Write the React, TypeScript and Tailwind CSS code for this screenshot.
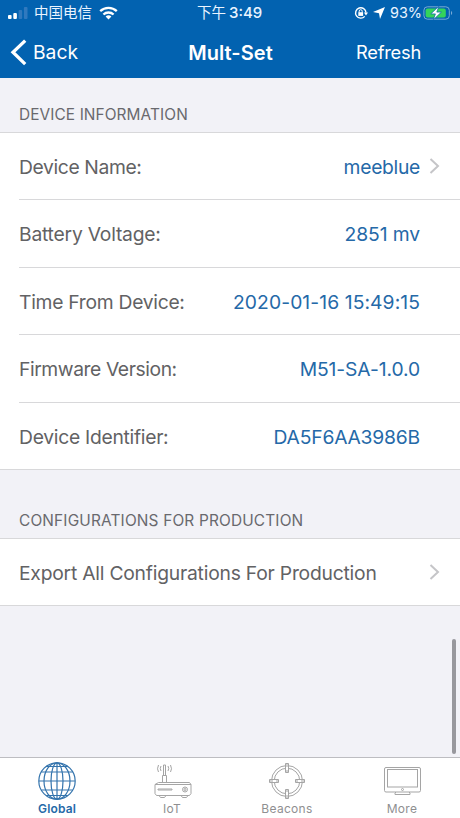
import type { ReactNode } from "react";

function Chevron() {
  return (
    <svg className="-mt-[2px]" width="11" height="16" viewBox="0 0 11 16" fill="none" stroke="#c5c5c8" strokeWidth="2">
      <path d="M1.5 1 9 8l-7.5 7" />
    </svg>
  );
}

type RowProps = { label: string; value?: string; labelClass: string; valueClass?: string; link?: boolean; last?: boolean; height: string };

function Row({ label, value, labelClass, valueClass = "", link, last, height }: RowProps) {
  return (
    <div className={`flex ${height} ${last ? "" : "pl-[19px]"}`}>
      <div className={`flex flex-1 items-center whitespace-nowrap border-b border-[#d8d8da] pt-[2px] text-[19.3px] ${last ? "pl-[19px]" : ""}`}>
        <span className={`text-[#626264] ${labelClass}`}>{label}</span>
        <span className={`ml-auto text-[#2569a8] ${valueClass}`}>{value}</span>
        <span className="ml-[9px] flex w-[31px]">{link && <Chevron />}</span>
      </div>
    </div>
  );
}

function StatusBar() {
  return (
    <div className="flex h-[26px] items-center text-[14.5px] leading-[26px] text-[#eaf4ff]">
      <div className="flex w-[197px] items-center pl-2">
        <svg width="20" height="13" viewBox="0 0 20 13">
          <rect x="0" y="8" width="3.6" height="4" rx="1" fill="#fff" />
          <rect x="5.3" y="6" width="3.6" height="6" rx="1" fill="#fff" />
          <rect x="10.6" y="3" width="3.6" height="9" rx="1" fill="#3079be" />
          <rect x="15.9" y="0" width="3.6" height="12" rx="1" fill="#3079be" />
        </svg>
        <span className="ml-[6px]">中国电信</span>
        <svg className="ml-[7px]" width="19" height="14" viewBox="0 0 19 14" fill="none" stroke="#fff" strokeWidth="2.3">
          <path d="M1.2 5.2a12 12 0 0 1 16.6 0M4.4 8.5a7.5 7.5 0 0 1 10.2 0" />
          <path d="M9.5 13.5 6.6 10.6a4.2 4.2 0 0 1 5.8 0Z" fill="#fff" stroke="none" />
        </svg>
      </div>
      <span className="w-[157px]">下午 <span className="-ml-[1px] text-[15px] font-medium">3:49</span></span>
      <svg width="14" height="14" viewBox="0 0 14 14" fill="none" stroke="#fff" strokeWidth="1.4">
        <path d="M10.700 10.400A5.200 5.200 0 1 1 12 6.600" />
        <path d="M9.900 6.500h4.100l-2 2.900Z" fill="#fff" stroke="none" />
        <rect x="4.3" y="6.2" width="4.8" height="3.7" fill="#fff" stroke="none" />
        <path d="M5.200 6.500V5.200a1.500 1.500 0 0 1 3 0v1.300" strokeWidth="1" />
      </svg>
      <svg className="ml-[5px]" width="12" height="12" viewBox="0 0 12 12" fill="#fff">
        <path d="M12 0 7 12 6 6.200 0 5Z" />
      </svg>
      <span className="ml-[5px] w-[33px] whitespace-nowrap text-[14.4px]">93%</span>
      <svg width="30" height="14" viewBox="0 0 30 14">
        <rect x=".9" y=".8" width="25.4" height="12.4" rx="3.5" fill="none" stroke="#78a9d5" />
        <rect x="2.6" y="2.5" width="20.2" height="9" rx="2" fill="#34d35b" />
        <path d="M28 5v4c1.6-.6 1.6-3.4 0-4" fill="#78a9d5" />
        <path d="M15.800.3 7.800 7.900h4.600L10.400 13.700l8-7.600h-4.600Z" fill="#fff" stroke="#0862ae" strokeWidth=".7" />
      </svg>
    </div>
  );
}

function Tab({ label, labelClass, children }: { label: string; labelClass: string; children: ReactNode }) {
  return (
    <div className="flex w-[115px] flex-col items-center">
      <svg className="-ml-[2px]" width="40" height="40" viewBox="0 0 40 40" fill="none" stroke="#a5a5a5" strokeWidth="1">{children}</svg>
      <span className={`-ml-[1px] text-[12px] leading-[15px] ${labelClass}`}>{label}</span>
    </div>
  );
}

export default function App() {
  return (
    <div className="flex h-[818px] w-[460px] flex-col overflow-hidden bg-[#f2f2f7] font-['Inter','Noto_Sans_CJK_SC',sans-serif]">
      <header className="h-[78px] shrink-0 bg-[#0262b0] text-white">
        <StatusBar />
        <div className="flex h-[52px] items-center text-[19.3px]">
          <div className="flex w-[165px] items-center pl-[10px]">
            <svg width="17" height="27" viewBox="0 0 17 27" fill="none" stroke="#fff" strokeWidth="3.3">
              <path d="M15.2 1.6 3 13.300l12.200 11.800" />
            </svg>
            <span className="ml-[6px]">Back</span>
          </div>
          <span className="w-[131px] pt-px text-center text-[20px] font-semibold tracking-[0.05px]">Mult-Set</span>
          <span className="flex-1 pr-[39px] pt-px text-right text-[18.3px] tracking-[-0.22px]">Refresh</span>
        </div>
      </header>
      <main className="relative h-[679px] shrink-0">
        <h2 className="flex h-[55px] items-end border-b border-[#d8d8da] pb-[6px] pl-[19px] text-[15.4px] tracking-[0.1px] text-[#69696e]">DEVICE INFORMATION</h2>
        <div className="bg-white">
          <Row height="h-[67px]" label="Device Name:" value="meeblue" labelClass="tracking-[-0.38px]" valueClass="tracking-[-0.3px]" link />
          <Row height="h-[68px]" label="Battery Voltage:" value="2851 mv" labelClass="tracking-[-0.22px]" valueClass="tracking-[-0.1px]" />
          <Row height="h-[67px]" label="Time From Device:" value="2020-01-16 15:49:15" labelClass="tracking-[-0.28px]" valueClass="tracking-[0.08px]" />
          <Row height="h-[68px]" label="Firmware Version:" value="M51-SA-1.0.0" labelClass="tracking-[-0.42px]" valueClass="tracking-[-0.1px]" />
          <Row height="h-[67px]" label="Device Identifier:" value="DA5F6AA3986B" labelClass="tracking-[-0.28px]" valueClass="tracking-[-0.2px]" last />
        </div>
        <h2 className="flex h-[69px] items-end border-b border-[#d8d8da] pb-[6px] pl-[19px] text-[15.4px] tracking-[0.17px] text-[#69696e]">CONFIGURATIONS FOR PRODUCTION</h2>
        <div className="bg-white">
          <Row height="h-[67px]" label="Export All Configurations For Production" labelClass="tracking-[-0.22px]" link last />
        </div>
        <div className="absolute right-[4px] top-[561px] h-[115px] w-[4px] rounded-full bg-[#98989d]" />
      </main>
      <nav className="flex flex-1 border-t border-[#bdbdc1] bg-white pt-[3px] text-[#8f8f91]">
        <Tab label="Global" labelClass="font-semibold tracking-[0.15px] text-[#2569a8]">
          <g stroke="#3474ad" strokeWidth="1.2">
            <circle cx="20" cy="20" r="18.2" />
            <ellipse cx="20" cy="20" rx="6" ry="18.2" />
            <ellipse cx="20" cy="20" rx="13" ry="18.2" />
            <path d="M20 2v36M2 20h36M4.500 11h31M4.500 29h31M9 5.500h22M9 34.500h22" />
          </g>
        </Tab>
        <Tab label="IoT" labelClass="tracking-[0.2px]">
          <g transform="translate(1 -1)">
            <path d="M5.500 22.500h31l1.500 2v9l-1.500 2h-33l-1.500-2v-9ZM2 24.500h36M5 29h14v1H5ZM6 35.500l1.500 2h4l1.500-2M28 35.500l1.500 2h4l1.500-2M9.500 22.500v-7h4v7M10.500 15.500V5h2v10.500M8 6q-1.500 2.500 0 5M5.500 5q-2 4 0 7M15 6q1.500 2.500 0 5M17.500 5q2 4 0 7" />
            <circle cx="32" cy="29.500" r="2.500" />
            <circle cx="32" cy="29.500" r="1" />
          </g>
        </Tab>
        <Tab label="Beacons" labelClass="tracking-[0.3px]">
          <circle cx="20" cy="20" r="15.500" />
          <circle cx="20" cy="20" r="12.800" />
          <g fill="#fff">
            <path d="M18.500 2.500h3v9h-3ZM18.500 28.500h3v9h-3ZM2.500 18.500h9v3h-9ZM28.500 18.500h9v3h-9Z" />
            <path d="M20 3v3M20 9v2M20 29v2M20 34v3M3 20h3M9 20h2M29 20h2M34 20h3" />
          </g>
        </Tab>
        <Tab label="More" labelClass="tracking-[0.35px]">
          <rect x="2.500" y="6.500" width="36" height="24.500" rx="1.500" />
          <rect x="5.500" y="8.500" width="30" height="17.500" />
          <circle cx="20.500" cy="28.500" r="1" />
          <path d="M14 31l-1 1v1.500h15v-1.500l-1-1" />
        </Tab>
      </nav>
    </div>
  );
}
